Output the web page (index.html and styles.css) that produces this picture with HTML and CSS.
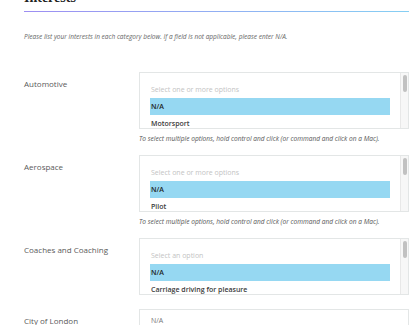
FILE: index.html
```html
<!doctype html>
<html>
<head>
<meta charset="UTF-8">
<title>Interests</title>
<link rel="stylesheet" href="styles.css">
</head>
<body>
<div class="page">

  <h1 class="section-title">Interests</h1>
  <p class="intro">Please list your interests in each category below. If a field is not applicable, please enter N/A.</p>

  <div class="field">
    <div class="field__label">Automotive</div>
    <div class="field__control">
      <div class="multi">
        <div class="multi__list">
          <div class="multi__placeholder">Select one or more options</div>
          <div class="multi__option multi__option--selected">N/A</div>
          <div class="multi__option">Motorsport</div>
        </div>
        <div class="multi__track"><div class="multi__thumb"></div></div>
      </div>
      <p class="help">To select multiple options, hold control and click (or command and click on a Mac).</p>
    </div>
  </div>

  <div class="field">
    <div class="field__label">Aerospace</div>
    <div class="field__control">
      <div class="multi">
        <div class="multi__list">
          <div class="multi__placeholder">Select one or more options</div>
          <div class="multi__option multi__option--selected">N/A</div>
          <div class="multi__option">Pilot</div>
        </div>
        <div class="multi__track"><div class="multi__thumb"></div></div>
      </div>
      <p class="help">To select multiple options, hold control and click (or command and click on a Mac).</p>
    </div>
  </div>

  <div class="field field--single">
    <div class="field__label">Coaches and Coaching</div>
    <div class="field__control">
      <div class="multi">
        <div class="multi__list">
          <div class="multi__placeholder">Select an option</div>
          <div class="multi__option multi__option--selected">N/A</div>
          <div class="multi__option">Carriage driving for pleasure</div>
        </div>
        <div class="multi__track"><div class="multi__thumb"></div></div>
      </div>
    </div>
  </div>

  <div class="field">
    <div class="field__label">City of London</div>
    <div class="field__control">
      <div class="textbox">N/A</div>
    </div>
  </div>

</div>
</body>
</html>
```

FILE: styles.css
```css
body {
	margin: 0;
	background: #fff;
	font-family: "Open Sans", "Noto Sans", sans-serif;
	overflow: hidden;
}

.page {
	padding: 0 4px 0 24px;
}

.section-title {
	margin: -9px 0 0;
	padding-bottom: 7px;
	font-family: "Liberation Serif", "DejaVu Serif", serif;
	font-size: 14px;
	line-height: 14px;
	font-weight: bold;
	color: #222;
	background: linear-gradient(to right, #9d8ef2, #86cff3) left bottom / 100% 1px no-repeat;
}

.intro {
	margin: 21px 0 31px;
	font-size: 6.5px;
	line-height: 8px;
	font-style: italic;
	color: #666;
}

.field {
	display: grid;
	grid-template-columns: 115px 1fr;
	margin-bottom: 12px;
}

.field--single {
	margin-bottom: 14px;
}

.field__label {
	padding-top: 7px;
	font-size: 8px;
	line-height: 10px;
	color: #5a5a5a;
}

/* the scrolling multi select */
.multi {
	display: flex;
	height: 57px;
	box-sizing: border-box;
	border: 1px solid #e3e6e6;
	overflow: hidden;
}

.multi__list {
	flex: 1;
	padding: 8px 10px 0;
}

.multi__placeholder,
.multi__option {
	height: 17px;
	line-height: 17px;
	padding-left: 1px;
	font-size: 7px;
	white-space: nowrap;
}

.multi__placeholder {
	color: #c3c3c3;
}

.multi__option {
	font-weight: 600;
	color: #3a3a3a;
}

.multi__option--selected {
	background: #96d8f2;
	color: #1e1e1e;
}

.multi__track {
	width: 7px;
	background: #f7f7f7;
	border-left: 1px solid #e8e8e8;
	padding-top: 2px;
}

.multi__thumb {
	width: 4px;
	height: 17px;
	margin-left: 2px;
	border-radius: 2px;
	background: #c1c1c1;
}

.help {
	margin: 6px 0 0;
	font-size: 6.6px;
	line-height: 8px;
	font-style: italic;
	color: #555;
}

.textbox {
	height: 30px;
	box-sizing: border-box;
	border: 1px solid #e3e6e6;
	padding: 6px 11px;
	font-size: 7px;
	line-height: 10px;
	color: #777;
}
```
